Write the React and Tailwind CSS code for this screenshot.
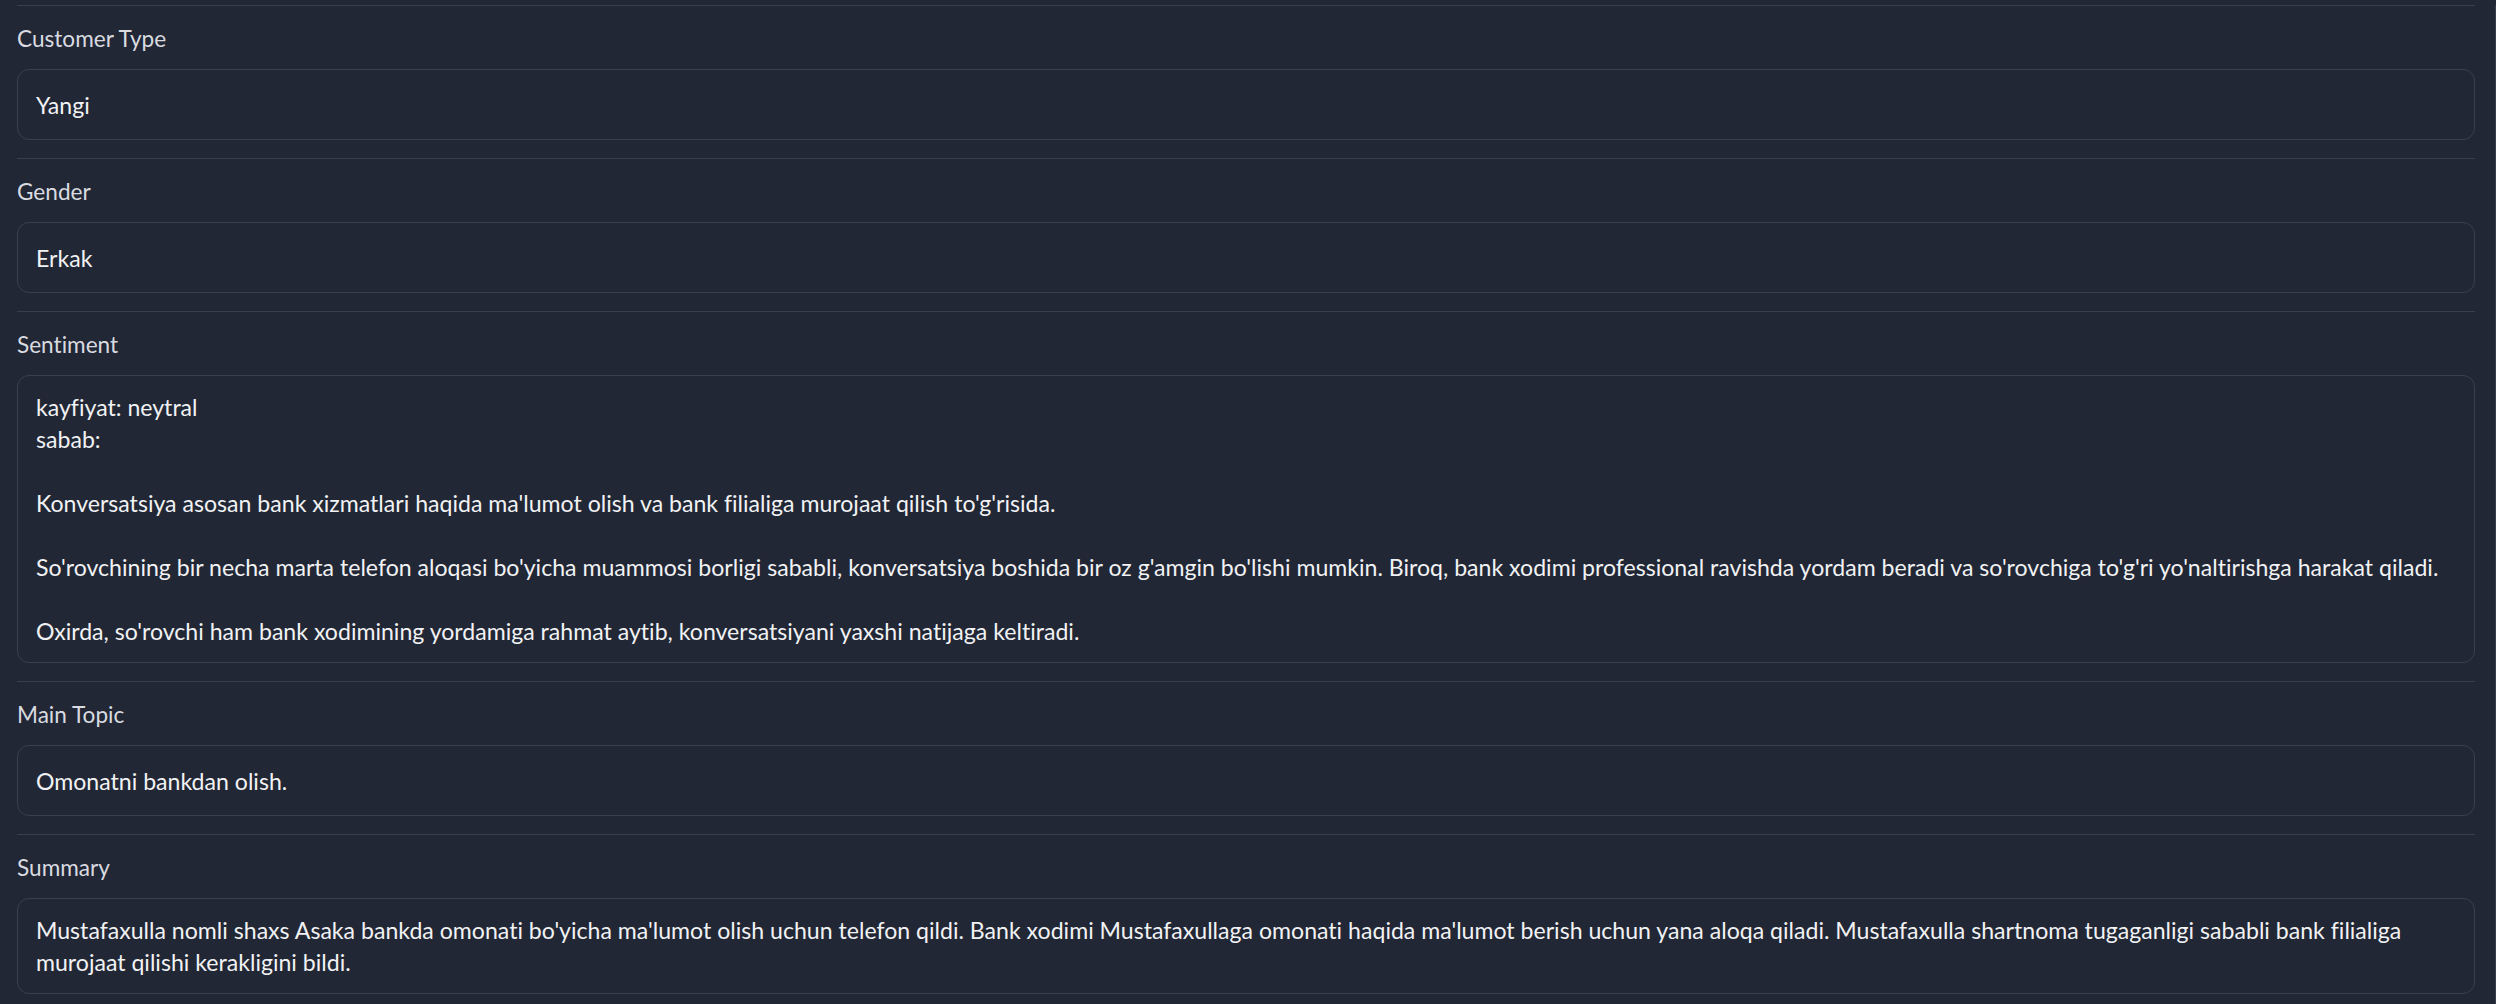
const sentiment = `kayfiyat: neytral
sabab:

Konversatsiya asosan bank xizmatlari haqida ma'lumot olish va bank filialiga murojaat qilish to'g'risida.

So'rovchining bir necha marta telefon aloqasi bo'yicha muammosi borligi sababli, konversatsiya boshida bir oz g'amgin bo'lishi mumkin. Biroq, bank xodimi professional ravishda yordam beradi va so'rovchiga to'g'ri yo'naltirishga harakat qiladi.

Oxirda, so'rovchi ham bank xodimining yordamiga rahmat aytib, konversatsiyani yaxshi natijaga keltiradi.`;

const summary =
  "Mustafaxulla nomli shaxs Asaka bankda omonati bo'yicha ma'lumot olish uchun telefon qildi. Bank xodimi Mustafaxullaga omonati haqida ma'lumot berish uchun yana aloqa qiladi. Mustafaxulla shartnoma tugaganligi sababli bank filialiga murojaat qilishi kerakligini bildi.";

function Field({ label, children, multiline }) {
  return (
    <section className="border-t border-[#393e4c] pt-[17px] pb-[18px]">
      <label className="block text-[22.6px] leading-[32px] text-[#d9dbe0]">{label}</label>
      {multiline ? (
        <div className="mt-[14px] whitespace-pre-wrap rounded-[12px] border border-[#3b404e] px-[18px] py-[15px] text-[23.1px] leading-[32px] text-[#f1f2f4]">
          {children}
        </div>
      ) : (
        <div className="mt-[14px] flex h-[71px] items-center rounded-[12px] border border-[#3b404e] px-[18px] text-[23.1px] leading-[32px] text-[#f1f2f4]">
          {children}
        </div>
      )}
    </section>
  );
}

export default function App() {
  return (
    <div
      className="min-h-screen bg-[#222735] pt-[5px] [font-variant-ligatures:none]"
      style={{ fontFamily: "Lato, 'Noto Sans', sans-serif" }}
    >
      <div className="border-r border-[#393e4c] pl-[17px] pr-[20px]">
        <Field label="Customer Type">Yangi</Field>
        <Field label="Gender">Erkak</Field>
        <Field label="Sentiment" multiline>
          {sentiment}
        </Field>
        <Field label="Main Topic">Omonatni bankdan olish.</Field>
        <Field label="Summary" multiline>
          {summary}
        </Field>
      </div>
    </div>
  );
}
